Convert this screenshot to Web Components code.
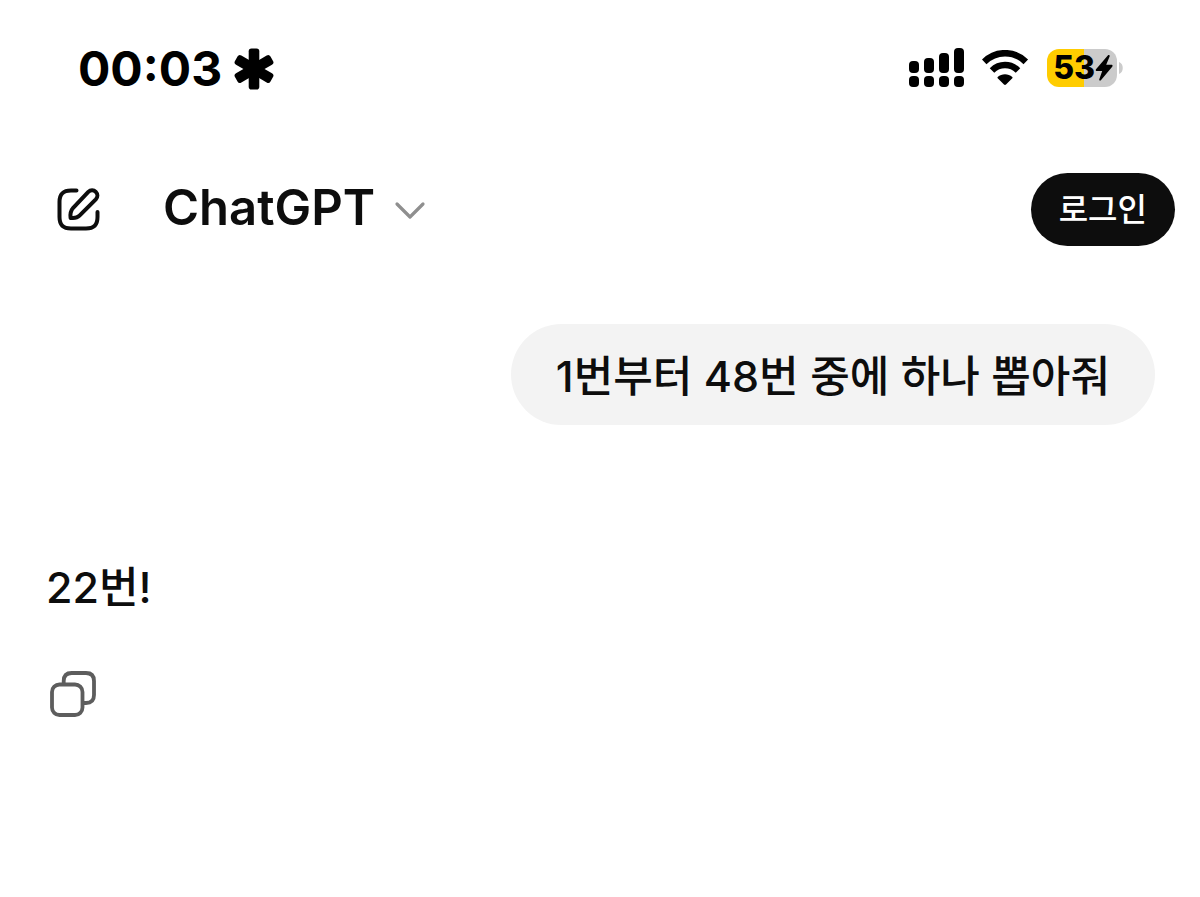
<!DOCTYPE html>
<html lang="ko">
<head>
<meta charset="UTF-8">
<meta name="viewport" content="width=device-width, initial-scale=1">
<title>ChatGPT</title>
<style>
  body {
    margin: 0;
    background: #fff;
    color: #0d0d0d;
    font-family: Inter, "Noto Sans CJK KR", sans-serif;
  }
</style>
</head>
<body>
<chat-app>
  <status-bar slot="status" time="00:03" battery="53"></status-bar>
  <chat-header slot="header" name="ChatGPT" login="로그인"></chat-header>
  <user-message>1번부터 48번 중에 하나 뽑아줘</user-message>
  <assistant-message>22번!</assistant-message>
</chat-app>

<script>
class ChatApp extends HTMLElement {
  constructor() {
    super();
    this.attachShadow({ mode: 'open' });
  }

  connectedCallback() {
    this.shadowRoot.innerHTML = `
      <style>
        :host { display: block; }
        main {
          display: flex;
          flex-direction: column;
          gap: 128px;
          padding: 64px 45px 48px 46px;
        }
      </style>
      <slot name="status"></slot>
      <slot name="header"></slot>
      <main><slot></slot></main>
    `;
  }
}

class StatusBar extends HTMLElement {
  constructor() {
    super();
    this.attachShadow({ mode: 'open' });
  }

  connectedCallback() {
    const time = this.getAttribute('time');
    const battery = this.getAttribute('battery');
    this.shadowRoot.innerHTML = `
      <style>
        :host {
          display: flex;
          align-items: center;
          justify-content: space-between;
          height: 136px;
          padding: 0 77px 0 78px;
          color: #000;
        }
        svg { display: block; }
        .left { display: flex; align-items: center; gap: 12px; padding-top: 2px; }
        .right { display: flex; align-items: center; gap: 17px; }
        time { font-size: 48px; font-weight: 700; line-height: 56px; }
        .battery { display: flex; align-items: center; gap: 2px; }
        .level {
          display: flex;
          align-items: center;
          justify-content: flex-end;
          box-sizing: border-box;
          width: 70px;
          height: 38px;
          padding-right: 4px;
          border-radius: 12px;
          background: linear-gradient(90deg, #ffcc00 ${battery}%, #cbcbcb ${battery}%);
          font-size: 32px;
          font-weight: 800;
          line-height: 38px;
        }
      </style>
      <div class="left">
        <time>${time}</time>
        <svg width="40" height="42" viewBox="0 0 40 42" fill="currentColor" aria-hidden="true">
          <rect x="14.700" y="0.500" width="10.600" height="41" rx="2.800"/>
          <rect x="14.700" y="0.500" width="10.600" height="41" rx="2.800" transform="rotate(60 20 21)"/>
          <rect x="14.700" y="0.500" width="10.600" height="41" rx="2.800" transform="rotate(120 20 21)"/>
        </svg>
      </div>
      <div class="right">
        <svg width="56" height="40" viewBox="0 0 56 40" fill="currentColor" role="img" aria-label="signal">
          <rect x="0" y="13" width="10" height="12" rx="4"/>
          <rect x="15" y="10" width="10" height="15" rx="4"/>
          <rect x="30" y="5" width="10" height="20" rx="4"/>
          <rect x="45" y="0" width="10" height="25" rx="4"/>
          <rect x="0" y="28" width="10" height="11" rx="4"/>
          <rect x="15" y="28" width="10" height="11" rx="4"/>
          <rect x="30" y="28" width="10" height="11" rx="4"/>
          <rect x="45" y="28" width="10" height="11" rx="4"/>
        </svg>
        <svg width="48" height="36" viewBox="1 1 48 36" fill="none" stroke="currentColor" stroke-width="6.500" role="img" aria-label="wifi">
          <path d="M3.200 12.800C15 1.300 33 1.300 44.800 12.800"/>
          <path d="M11 21.500C18.500 14.300 29.500 14.300 37 21.500"/>
          <path d="M24 25.300c2.700 0 5.200.9 7.300 2.600.4.400.4.900 0 1.300l-6.300 6.300c-.6.600-1.400.6-2 0l-6.300-6.300c-.4-.4-.4-.9 0-1.300 2.100-1.700 4.600-2.600 7.300-2.600z" fill="currentColor" stroke="none"/>
        </svg>
        <div class="battery">
          <div class="level">
            <span>${battery}</span>
            <svg width="18" height="26" viewBox="0 0 18 26" fill="currentColor" aria-hidden="true">
              <path d="M12.800.500 1 14.200c-.6.800-.2 1.800.8 1.800h5.400L4.300 24.200c-.4 1.300.9 1.900 1.800.9L17.200 11.700c.7-.9.300-1.900-.8-1.900h-5.200L14.600 1.600c.5-1.300-.9-2-1.800-1.100z"/>
            </svg>
          </div>
          <svg width="4" height="12" viewBox="0 0 4 12" fill="#cbcbcb" aria-hidden="true"><path d="M0 0c5 1.500 5 10.500 0 12z"/></svg>
        </div>
      </div>
    `;
  }
}

class ChatHeader extends HTMLElement {
  constructor() {
    super();
    this.attachShadow({ mode: 'open' });
  }

  connectedCallback() {
    this.shadowRoot.innerHTML = `
      <style>
        :host {
          display: flex;
          align-items: center;
          justify-content: space-between;
          padding: 37px 25px 14px 56px;
        }
        button {
          margin: 0;
          padding: 0;
          border: 0;
          background: none;
          color: inherit;
          font-family: inherit;
          cursor: pointer;
        }
        svg { display: block; }
        nav { display: flex; align-items: center; gap: 62px; }
        .model {
          display: flex;
          align-items: center;
          gap: 19px;
          font-size: 49px;
          font-weight: 600;
          line-height: 60px;
        }
        .model span { padding-bottom: 4px; }
        .login {
          height: 73px;
          padding: 0 28px;
          border-radius: 37px;
          background: #0d0d0d;
          color: #fff;
          font-size: 32px;
          font-weight: 500;
          line-height: 40px;
        }
      </style>
      <nav>
        <button aria-label="새 채팅">
          <svg width="45" height="45" viewBox="0 0 45 45" fill="none" stroke="currentColor" stroke-width="4" stroke-linecap="round" stroke-linejoin="round">
            <path d="M20.500 3.500H15C7 3.500 3.500 7 3.500 15v15C3.500 38 7 41.500 15 41.500h15c8 0 11.500-3.500 11.500-11.500v-5"/>
            <path d="M32.300 4.900c2.200-2.100 5.400-2.100 7.500 0s2.100 5.300 0 7.500L23.500 28.700c-2.500 2.500-6 2.600-8.900 2.200-.5-3.500.1-7.200 2.600-10.100z"/>
          </svg>
        </button>
        <button class="model">
          <span>${this.getAttribute('name')}</span>
          <svg width="32" height="20" viewBox="0 0 32 20" fill="none" stroke="#8f8f8f" stroke-width="3.200" stroke-linecap="round" stroke-linejoin="round"><path d="M3 4l13 13L29 4"/></svg>
        </button>
      </nav>
      <button class="login">${this.getAttribute('login')}</button>
    `;
  }
}

class UserMessage extends HTMLElement {
  constructor() {
    super();
    this.attachShadow({ mode: 'open' });
  }

  connectedCallback() {
    this.shadowRoot.innerHTML = `
      <style>
        :host { display: flex; justify-content: flex-end; }
        .bubble {
          padding: 20px 45px 16px;
          border-radius: 51px;
          background: #f3f3f3;
          font-size: 43px;
          font-weight: 500;
          line-height: 65px;
        }
      </style>
      <div class="bubble"><slot></slot></div>
    `;
  }
}

class AssistantMessage extends HTMLElement {
  constructor() {
    super();
    this.attachShadow({ mode: 'open' });
  }

  connectedCallback() {
    this.shadowRoot.innerHTML = `
      <style>
        :host {
          display: flex;
          flex-direction: column;
          align-items: flex-start;
          gap: 50px;
          padding-top: 2px;
        }
        .text {
          font-size: 43px;
          font-weight: 500;
          line-height: 65px;
        }
        button {
          margin: 0;
          padding: 0 3px;
          border: 0;
          background: none;
          color: #5d5d5d;
          cursor: pointer;
        }
        svg { display: block; }
      </style>
      <div class="text"><slot></slot></div>
      <button aria-label="복사">
        <svg width="48" height="48" viewBox="0 0 48 48" fill="none" stroke="currentColor" stroke-width="3.800" stroke-linejoin="round">
          <rect x="3" y="14.500" width="30.500" height="30.500" rx="7.500"/>
          <path d="M14.700 14v-3c0-5.500 2.500-8 8-8H37c5.500 0 8 2.500 8 8v14c0 5.500-2.500 8-8 8h-3"/>
        </svg>
      </button>
    `;
  }
}

customElements.define('chat-app', ChatApp);
customElements.define('status-bar', StatusBar);
customElements.define('chat-header', ChatHeader);
customElements.define('user-message', UserMessage);
customElements.define('assistant-message', AssistantMessage);
</script>
</body>
</html>
